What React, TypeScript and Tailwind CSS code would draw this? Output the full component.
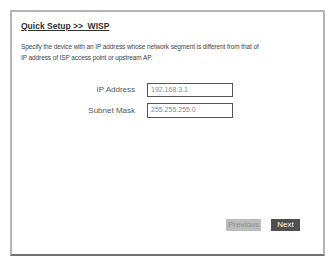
import React from "react";

const App = () => {
  return (
    <div className="w-[332px] h-[262px] bg-white pt-[10px] pl-[10px]" style={{ fontFamily: '"Liberation Sans", Arial, sans-serif' }}>
      <div className="w-[315px] h-[246px] border-2 border-[#b4b4b4] border-b-[#707070] flex flex-col px-[9px]">
        <div className="mt-[9px] text-[8.5px] font-bold text-[#333] underline underline-offset-[1px] leading-[10px]">
          Quick Setup &gt;&gt;&nbsp; WISP
        </div>
        <div className="mt-[10px] text-[6.5px] leading-[11px] text-[#444] tracking-[-0.1px]">
          <p>Specify the device with an IP address whose network segment is different from that of</p>
          <p>IP address of ISP access point or upstream AP.</p>
        </div>
        <div className="mt-[20px] flex flex-col gap-[6px]">
          <div className="flex items-center">
            <span className="w-[114px] text-right text-[8px] text-[#555]">IP Address</span>
            <div className="ml-[12px] w-[86px] h-[14px] border border-[#555] flex items-center pl-[3px] text-[7px] text-[#888]">192.168.3.1</div>
          </div>
          <div className="flex items-center">
            <span className="w-[114px] text-right text-[8px] text-[#555]">Subnet Mask</span>
            <div className="ml-[12px] w-[86px] h-[15px] border border-[#555] flex items-center pl-[3px] text-[7px] text-[#888]">255.255.255.0</div>
          </div>
        </div>
        <div className="mt-auto mb-[23px] flex justify-end gap-[10px] pr-[14px]">
          <button className="w-[35px] h-[12px] bg-[#bdbdbd] text-[#8a8a8a] text-[8px] leading-[12px]">Previous</button>
          <button className="w-[29px] h-[12px] bg-[#505050] text-white text-[8px] leading-[12px]">Next</button>
        </div>
      </div>
    </div>
  );
};

export default App;
